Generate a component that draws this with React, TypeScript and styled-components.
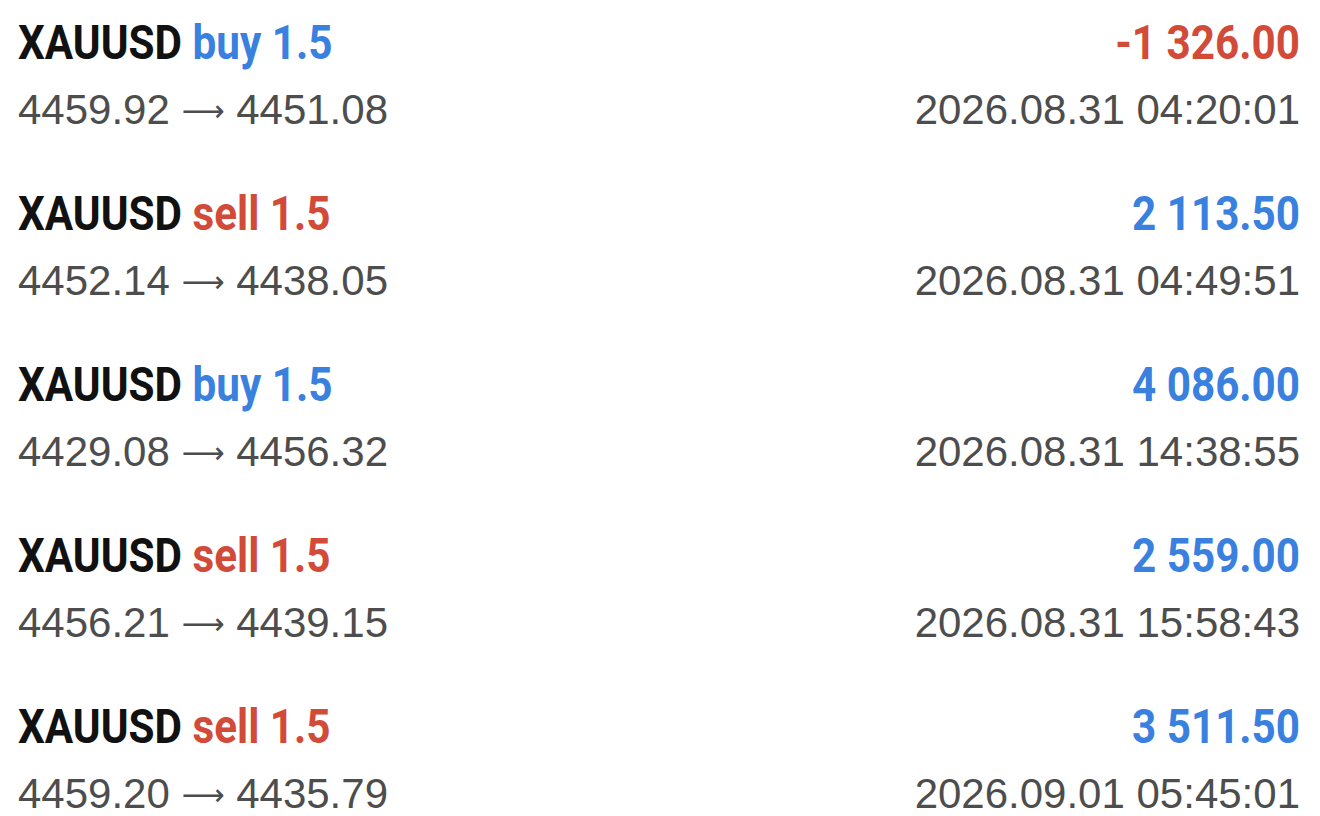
import React, { FC } from "react"
import styled, { createGlobalStyle } from "styled-components"

const GlobalStyle = createGlobalStyle`
  html, body {
    margin: 0;
    padding: 0;
    background: #ffffff;
  }
`

const List = styled.div({
  display: 'flex',
  flexDirection: 'column',
  padding: '0 20px 0 18px',
  width: '1320px',
  height: '816px',
  boxSizing: 'border-box',
  overflow: 'hidden',
})

const Row = styled.div({
  display: 'grid',
  gridTemplateColumns: '1fr auto',
  gridTemplateRows: '84px 87px',
  alignItems: 'center',
})

// no condensed face is installed, so the heading font is narrowed by scaleX
const Title = styled.div({
  fontFamily: 'Roboto, "Liberation Sans", sans-serif',
  fontWeight: 700,
  fontSize: '48px',
  color: '#111111',
  whiteSpace: 'nowrap',
  justifySelf: 'start',
  transform: 'scaleX(0.88)',
  transformOrigin: 'left center',
})

const Side = styled.span<{ $side: 'buy' | 'sell' }>(({ $side }) => ({
  color: $side === 'buy' ? '#3a80df' : '#d24b39',
}))

const Profit = styled.div<{ $loss: boolean }>(({ $loss }) => ({
  fontFamily: 'Roboto, "Liberation Sans", sans-serif',
  fontWeight: 700,
  fontSize: '48px',
  color: $loss ? '#d24b39' : '#3a80df',
  whiteSpace: 'nowrap',
  justifySelf: 'end',
  transform: 'scaleX(0.88)',
  transformOrigin: 'right center',
}))

const Sub = styled.div<{ $right?: boolean }>(({ $right }) => ({
  fontFamily: '"Liberation Sans", Arial, sans-serif',
  fontSize: '42px',
  lineHeight: '40px',
  color: '#4d4d4d',
  textAlign: $right ? 'right' : 'left',
  whiteSpace: 'nowrap',
  alignSelf: 'start',
  marginTop: '6px',
}))

const Arrow = styled.span({
  fontFamily: '"DejaVu Sans", sans-serif',
  fontSize: '30px',
  lineHeight: '1',
  verticalAlign: '3px',
})

type Trade = {
  side: 'buy' | 'sell'
  open: string
  close: string
  profit: string
  time: string
}

const trades: Trade[] = [
  { side: 'buy', open: '4459.92', close: '4451.08', profit: '-1 326.00', time: '2026.08.31 04:20:01' },
  { side: 'sell', open: '4452.14', close: '4438.05', profit: '2 113.50', time: '2026.08.31 04:49:51' },
  { side: 'buy', open: '4429.08', close: '4456.32', profit: '4 086.00', time: '2026.08.31 14:38:55' },
  { side: 'sell', open: '4456.21', close: '4439.15', profit: '2 559.00', time: '2026.08.31 15:58:43' },
  { side: 'sell', open: '4459.20', close: '4435.79', profit: '3 511.50', time: '2026.09.01 05:45:01' },
]

const App: FC = () => (
  <>
    <GlobalStyle />
    <List>
      {trades.map((t, i) => (
        <Row key={i}>
          <Title>
            XAUUSD <Side $side={t.side}>{t.side} 1.5</Side>
          </Title>
          <Profit $loss={t.profit.startsWith('-')}>{t.profit}</Profit>
          <Sub>
            {t.open} <Arrow>⟶</Arrow> {t.close}
          </Sub>
          <Sub $right>{t.time}</Sub>
        </Row>
      ))}
    </List>
  </>
)

export default App
